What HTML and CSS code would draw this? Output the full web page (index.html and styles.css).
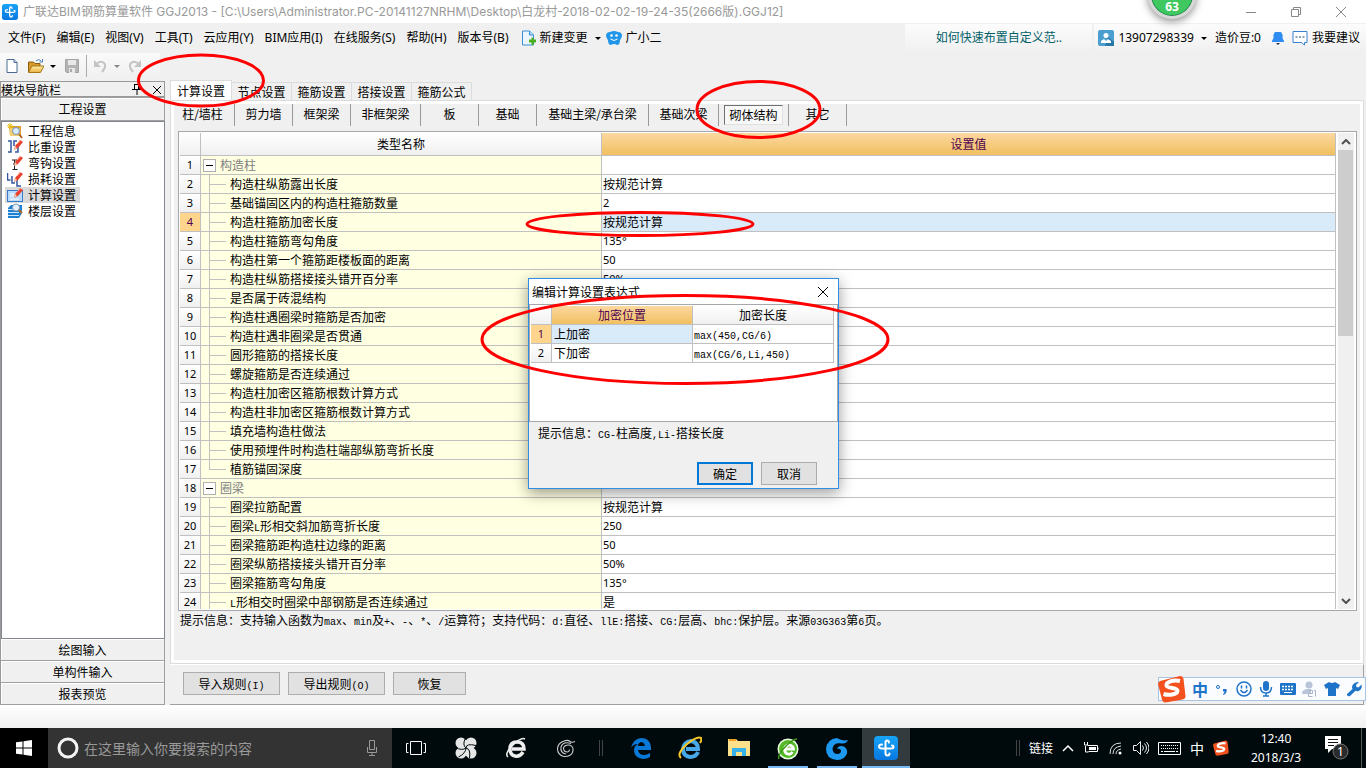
FILE: index.html
```html
<!DOCTYPE html>
<html lang="zh-CN">
<head>
<meta charset="utf-8">
<title>广联达BIM钢筋算量软件 GGJ2013</title>
<link rel="stylesheet" href="styles.css">
</head>
<body>
<svg class="defs" aria-hidden="true">
  <defs>
    <linearGradient id="blue" x1="0" y1="0" x2="0" y2="1"><stop offset="0" stop-color="#18a4f8"/><stop offset="1" stop-color="#0878e0"/></linearGradient>
    <linearGradient id="folder" x1="0" y1="0" x2="0" y2="1"><stop offset="0" stop-color="#fff0a8"/><stop offset="1" stop-color="#e8b040"/></linearGradient>
    <symbol id="app" viewBox="0 0 24 24"><rect width="24" height="24" rx="4" fill="url(#blue)"/><path d="M15 6.500q-.3-2-2-2-1.500 0-1.500 2v10.500q0 2.500 2 2.500t2-2M8 8.500q-3 0-3 2t3 2h9q2.500 0 2.500-1.500T18 9.500" fill="none" stroke="#fff" stroke-width="2" stroke-linecap="round"/></symbol>
    <symbol id="pencil" viewBox="0 0 10 12"><path d="M1 11l1-4 5-6 3 2-5 6z" fill="#e8402c"/><path d="M1 11l1-4 2 2z" fill="#f4d0b0"/><path d="M4 5l4-4" stroke="#ff9a80" stroke-width="1"/></symbol>
    <symbol id="sogou" viewBox="0 0 28 28"><path d="M2 6l20-5q3 0 3.500 3l2 17q0 3-3 3.500l-17 3q-3 0-3.500-3L0 9q0-2 2-3z" fill="#f4511e"/><path d="M22 6c-7-1.500-14 1-13.500 4.500C9 14 20 12 19.500 16c-.5 4-9 4.500-14 3" fill="none" stroke="#fff" stroke-width="4"/></symbol>
  </defs>
</svg>

<header class="titlebar">
  <svg class="i16" viewBox="0 0 24 24"><use href="#app"/></svg>
  <h1 class="title">广联达BIM钢筋算量软件 GGJ2013 - [C:\Users\Administrator.PC-20141127NRHM\Desktop\白龙村-2018-02-02-19-24-35(2666版).GGJ12]</h1>
  <div class="winbtns">
    <button aria-label="最小化"><svg viewBox="0 0 12 12"><path d="M1 6.500h10"/></svg></button>
    <button aria-label="还原"><svg viewBox="0 0 12 12"><path d="M1.500 3.500h7v7h-7zM3.500 3.500v-2h7v7h-2"/></svg></button>
    <button aria-label="关闭"><svg viewBox="0 0 12 12"><path d="M1 1l10 10M11 1L1 11"/></svg></button>
  </div>
</header>

<nav class="menubar">
  <button>文件(F)</button><button>编辑(E)</button><button>视图(V)</button><button>工具(T)</button><button>云应用(Y)</button><button>BIM应用(I)</button><button>在线服务(S)</button><button>帮助(H)</button><button>版本号(B)</button>
  <button class="withicon"><svg class="i16" viewBox="0 0 16 16"><path d="M2.500 1h7l4 4v10h-11z" fill="#eaf6ff" stroke="#3a8fd0"/><path d="M9.500 1v4h4" fill="#a8d8f8" stroke="#3a8fd0"/><path d="M9 9.500h2.500V7.500h2v2H16v3h-2.500V15h-2v-2.500H9z" fill="#4caf20"/></svg>新建变更<i class="caret"></i></button>
  <button class="withicon"><svg class="i16" viewBox="0 0 16 16"><path d="M4 2q4-2 8 0 4 0 4 4-1 3-2 4 0 5-3 5-1-1-3-1-2 0-3 1-3 0-3-5-1-1-2-4 0-4 4-4z" fill="#2196e8"/><circle cx="5.500" cy="5.500" r="1.300" fill="#fff"/><circle cx="10.500" cy="5.500" r="1.300" fill="#fff"/><path d="M4.500 9q3.500 3 7 0" stroke="#fff" fill="none"/></svg>广小二</button>
  <div class="promo"><a href="#">如何快速布置自定义范..</a></div>
  <div class="account">
    <button class="withicon"><svg class="i16" viewBox="0 0 16 16"><rect width="16" height="16" rx="2" fill="#4a9fd0"/><path d="M10 7l6 5v4H7z" fill="#2878a8"/><circle cx="8" cy="5.500" r="2.500" fill="#fff"/><path d="M3 13V11l3-2 2 2 2-2 3 2v2z" fill="#fff"/></svg>13907298339<i class="caret"></i></button>
    <span>造价豆:0</span>
    <svg class="bell" viewBox="0 0 12 16"><path d="M3 2h6q2 2 1.500 6l1.500 3v1H0v-1l1.500-3Q1 4 3 2z" fill="#2e8cf0"/><path d="M4 13h4l-2 2z" fill="#234"/></svg>
    <button class="withicon"><svg class="i16" viewBox="0 0 16 16"><path d="M1 1.500h14v11h-2.500V15l-3-2.500H1z" fill="#fff" stroke="#3a80d0"/><path d="M3.500 7h2M7 7h2M10.500 7h2" stroke="#246"/></svg>我要建议</button>
  </div>
</nav>

<div class="toolbar">
  <button aria-label="新建"><svg class="i16" viewBox="0 0 16 16"><path d="M3 1.500h7l3 3v10H3z" fill="#fff" stroke="#4a6a90"/><path d="M10 1.500v3h3" fill="#c8d8e8" stroke="#4a6a90"/></svg></button>
  <button aria-label="打开" class="open"><svg class="i16" viewBox="0 0 16 16"><path d="M0.500 14V4h5l1.500 1.500h5V8" fill="#d89828" stroke="#8a6010"/><path d="M.5 14.500L4 8h12l-3.500 6.500z" fill="url(#folder)" stroke="#a87818"/><path d="M8 3q3-3 5 0M14.500 1v3h-3" fill="none" stroke="#4a80c0"/></svg><i class="caret"></i></button>
  <button aria-label="保存" class="save"><svg class="i16" viewBox="0 0 16 16"><path d="M1.500 1.500h13v13h-12l-1-1z" fill="#b4b4b4" stroke="#a4a4a4"/><path d="M4 2h8v5H4zM5 10h6v5H5z" fill="#e8e8e8"/><path d="M6 11h2v3H6z" fill="#aaa"/></svg></button>
  <button aria-label="撤销" class="undo"><svg class="i16" viewBox="0 0 16 16"><path d="M4 6q5-4 8-1t-2 9" fill="none" stroke="#c4c4c4" stroke-width="2"/><path d="M2 2v7h7z" fill="#c4c4c4"/></svg><i class="caret dim"></i></button>
  <button aria-label="重做"><svg class="i16" viewBox="0 0 16 16"><path d="M11 6q-5-4-8-1t2 9" fill="none" stroke="#c4c4c4" stroke-width="2"/><path d="M13 2v7H6z" fill="#c4c4c4"/></svg></button>
</div>

<main class="workspace">
  <aside class="side">
    <div class="sidehead"><span>模块导航栏</span>
      <svg class="i12" viewBox="0 0 12 12"><path d="M3 1.500h6M3.500 1v5M7.500 1v5M8.500 1v5M1 6.500h10M6 7v5" stroke="#000" fill="none"/></svg>
      <svg class="i12" viewBox="0 0 12 12"><path d="M2 3l8 8M10 3l-8 8" stroke="#000" fill="none"/></svg>
    </div>
    <button class="sidebtn first">工程设置</button>
    <ul class="navlist">
      <li><svg class="i16" viewBox="0 0 16 16"><path d="M2 3h12v10H3z" fill="#e0a030"/><path d="M3 5h10v8H3z" fill="#f4d070"/><path d="M3 0v6M0 3h6M1 1l4 4M5 1L1 5" stroke="#e8c020"/><circle cx="9" cy="8" r="3.500" fill="#d8ecff" stroke="#7890b0"/><path d="M12 11l3 4" stroke="#b06820" stroke-width="2"/></svg>工程信息</li>
      <li><svg class="i16" viewBox="0 0 16 16"><path d="M1 2h3v11H1M10 2H7v5M8 13h3V8" stroke="#3058a0" fill="none" stroke-width="1.500"/><use href="#pencil" x="6" y="0" width="10" height="12"/></svg>比重设置</li>
      <li><svg class="i16" viewBox="0 0 16 16"><path d="M5 5h5M7.500 5v9M5.500 14.500h5M6 9h3" stroke="#222" fill="none"/><use href="#pencil" x="6" y="0" width="10" height="12"/></svg>弯钩设置</li>
      <li><svg class="i16" viewBox="0 0 16 16"><path d="M.5 2v7h3M5 5v7h3M10 9v6h4" stroke="#3058a0" fill="none" stroke-width="1.500"/><use href="#pencil" x="6" y="0" width="10" height="12"/></svg>损耗设置</li>
      <li class="on"><svg class="i16" viewBox="0 0 16 16"><rect x=".5" y="3.500" width="15" height="11" fill="#b8dcfc" stroke="#3a78c8"/><path d="M3 7h5M3 9h4M3 12h9" stroke="#fff"/><use href="#pencil" x="6" y="0" width="10" height="12"/></svg>计算设置</li>
      <li><svg class="i16" viewBox="0 0 16 16"><path d="M1 5l3-3h11v8l-3 5H1z" fill="#2080d0"/><path d="M1 6.500h11M1 9.500h11M1 12.500h11" stroke="#c8e8ff"/><circle cx="9" cy="4.500" r="3.500" fill="#e4f2ff" stroke="#8098b0"/><path d="M12 7l3 3" stroke="#b06820" stroke-width="2"/></svg>楼层设置</li>
    </ul>
    <button class="sidebtn">绘图输入</button>
    <button class="sidebtn">单构件输入</button>
    <button class="sidebtn">报表预览</button>
  </aside>

  <section class="content">
    <div class="tabs">
      <button class="on">计算设置</button><button>节点设置</button><button>箍筋设置</button><button>搭接设置</button><button>箍筋公式</button>
    </div>
    <div class="page">
      <div class="subtabs">
        <button class="w64">柱/墙柱</button><button class="w58">剪力墙</button><button class="w58">框架梁</button><button class="w70">非框架梁</button><button class="w58">板</button><button class="w58">基础</button><button class="w112">基础主梁/承台梁</button><button class="w70">基础次梁</button><button class="w70 on"><span>砌体结构</span></button><button class="w58">其它</button>
      </div>
      <div class="gridbox">
        <div class="gridview">
        <table class="grid">
          <colgroup><col class="c1"><col class="c2"><col></colgroup>
          <thead><tr><th></th><th>类型名称</th><th class="sel">设置值</th></tr></thead>
          <tbody>
            <tr class="cat"><th>1</th><td><button class="fold" aria-label="折叠"></button>构造柱</td><td></td></tr>
            <tr><th>2</th><td>构造柱纵筋露出长度</td><td>按规范计算</td></tr>
            <tr><th>3</th><td>基础锚固区内的构造柱箍筋数量</td><td class="num">2</td></tr>
            <tr class="cur"><th>4</th><td>构造柱箍筋加密长度</td><td>按规范计算</td></tr>
            <tr><th>5</th><td>构造柱箍筋弯勾角度</td><td class="num">135°</td></tr>
            <tr><th>6</th><td>构造柱第一个箍筋距楼板面的距离</td><td class="num">50</td></tr>
            <tr><th>7</th><td>构造柱纵筋搭接接头错开百分率</td><td class="num">50%</td></tr>
            <tr><th>8</th><td>是否属于砖混结构</td><td></td></tr>
            <tr><th>9</th><td>构造柱遇圈梁时箍筋是否加密</td><td></td></tr>
            <tr><th>10</th><td>构造柱遇非圈梁是否贯通</td><td></td></tr>
            <tr><th>11</th><td>圆形箍筋的搭接长度</td><td></td></tr>
            <tr><th>12</th><td>螺旋箍筋是否连续通过</td><td></td></tr>
            <tr><th>13</th><td>构造柱加密区箍筋根数计算方式</td><td></td></tr>
            <tr><th>14</th><td>构造柱非加密区箍筋根数计算方式</td><td></td></tr>
            <tr><th>15</th><td>填充墙构造柱做法</td><td></td></tr>
            <tr><th>16</th><td>使用预埋件时构造柱端部纵筋弯折长度</td><td></td></tr>
            <tr class="last"><th>17</th><td>植筋锚固深度</td><td></td></tr>
            <tr class="cat"><th>18</th><td><button class="fold" aria-label="折叠"></button>圈梁</td><td></td></tr>
            <tr><th>19</th><td>圈梁拉筋配置</td><td>按规范计算</td></tr>
            <tr><th>20</th><td>圈梁<span class="m">L</span>形相交斜加筋弯折长度</td><td class="num">250</td></tr>
            <tr><th>21</th><td>圈梁箍筋距构造柱边缘的距离</td><td class="num">50</td></tr>
            <tr><th>22</th><td>圈梁纵筋搭接接头错开百分率</td><td class="num">50%</td></tr>
            <tr><th>23</th><td>圈梁箍筋弯勾角度</td><td class="num">135°</td></tr>
            <tr><th>24</th><td><span class="m">L</span>形相交时圈梁中部钢筋是否连续通过</td><td>是</td></tr>
          </tbody>
        </table>
        </div>
        <div class="scroll">
          <button aria-label="向上"><svg viewBox="0 0 10 6"><path d="M1 5l4-4 4 4"/></svg></button>
          <div class="track"><div class="thumb"></div></div>
          <button aria-label="向下"><svg viewBox="0 0 10 6"><path d="M1 1l4 4 4-4"/></svg></button>
        </div>
      </div>
      <p class="tip">提示信息：支持输入函数为<span class="m">max</span>、<span class="m">min</span>及<span class="m">+</span>、<span class="m">-</span>、<span class="m">*</span>、<span class="m">/</span>运算符；支持代码：<span class="m">d:</span>直径、<span class="m">llE:</span>搭接、<span class="m">CG:</span>层高、<span class="m">bhc:</span>保护层。来源<span class="m">03G363</span>第<span class="m">6</span>页。</p>
    </div>
    <div class="actions">
      <button class="btn">导入规则<span class="m">(I)</span></button><button class="btn">导出规则<span class="m">(O)</span></button><button class="btn short">恢复</button>
    </div>
  </section>
</main>
<div class="status"></div>

<footer class="taskbar">
  <button class="start" aria-label="开始"><svg class="i16" viewBox="0 0 16 16"><path d="M0 2.300l6.500-.9v6.100H0zM7.500 1.200L16 0v7.500H7.500zM0 8.500h6.500v6.100L0 13.700zM7.500 8.500H16V16l-8.500-1.200z" fill="#fff"/></svg></button>
  <label class="search"><svg class="i22" viewBox="0 0 22 22"><circle cx="11" cy="11" r="9" fill="none" stroke="#f4f4f4" stroke-width="3"/></svg><input type="text" placeholder="在这里输入你要搜索的内容" aria-label="搜索"><svg class="mic" viewBox="0 0 12 18"><path d="M3.500 1.500h5v9h-5zM1.500 8v5.500h9V8M6 13.500V17M3 16.500h6" fill="none" stroke="#999"/></svg></label>
  <button class="task" aria-label="任务视图"><svg class="i22" viewBox="0 0 22 22"><path d="M5.500 4.500h11v13h-11zM3.500 6.500h-2v9h2M18.500 6.500h2v9h-2" fill="none" stroke="#fff"/></svg></button>
  <button class="task" aria-label="风扇"><svg class="i22" viewBox="0 0 22 22"><g fill="#e6e6e6"><circle cx="6" cy="6" r="5.500"/><circle cx="16" cy="6" r="5.500"/><circle cx="6" cy="16" r="5.500"/><circle cx="16" cy="16" r="5.500"/><circle cx="11" cy="11" r="8"/></g><path d="M11 11Q7 8 10.500 1M11 11q0-5 10-2.500M11 11q5 1 3.500 10M11 11q0 5-7.500 9M11 11q-4 3-10.500-.5" fill="none" stroke="#000a0d"/></svg></button>
  <button class="task" aria-label="浏览器"><svg class="i22" viewBox="0 0 22 22"><path d="M18 15q-3 5-8 4-5-1-5-7 0-7 7-7 7 0 7 7H7" fill="none" stroke="#eee" stroke-width="3.500"/><path d="M3 20Q-1 17 8 8q8-8 12-6" fill="none" stroke="#eee" stroke-width="1.500"/></svg></button>
  <button class="task" aria-label="广联达"><svg class="i22" viewBox="0 0 22 22"><path d="M20 4.500q-3 1.500-5 0-2-2-6-.5Q3 6 2.500 11.500 2.500 18 9 19.500q6 .5 8.500-4 2-6-3-7.500-5-.5-6 3 0 4 4 4 2-.5 2-2.500M16 6.500Q8 4 6 10q-1 6 5 7" fill="none" stroke="#ccc" stroke-width="1.100"/></svg></button>
  <i class="grip"></i>
  <button class="task" aria-label="Edge"><svg class="i22" viewBox="0 0 22 22"><path d="M1 11Q3 2 11 1q9 0 10 9v3H8q1 5 6 5 3 0 6-2v4q-3 2-7 2-9-1-9-9 0-4 4-6-5 0-7 4zM8 9h7q-1-4-4-4-3 1-3 4z" fill="#0a78d7"/></svg></button>
  <button class="task" aria-label="Internet Explorer"><svg class="i24" viewBox="0 0 24 24"><path d="M20 16q-2 5-8 5-7-1-7-8 1-7 8-8 7 1 7 8H8" fill="none" stroke="#48a8e8" stroke-width="4"/><path d="M3 22Q-2 18 9 8q10-8 14-6 1 2-1 5" fill="none" stroke="#f4c828" stroke-width="2"/></svg></button>
  <button class="task" aria-label="文件资源管理器"><svg class="i22" viewBox="0 0 22 22"><path d="M0 2h8l2 2h12v15H0z" fill="#fde08a"/><path d="M1 2h7v2H1z" fill="#f0a020"/><path d="M4 11h14v8h-4v-4H8v4H4z" fill="#38b0e8"/></svg></button>
  <button class="task run" aria-label="360浏览器"><svg class="i22" viewBox="0 0 22 22"><circle cx="11" cy="11" r="10.500" fill="#e8ffe0"/><circle cx="11" cy="11" r="9" fill="#54b828"/><path d="M15.500 14q-2 3-5 2-3-1-3-5 1-4 5-4 4 1 4 4H8" fill="none" stroke="#fff" stroke-width="2.800"/><path d="M2 21Q0 17 9 8q7-7 11-7" fill="none" stroke="#3c9818" stroke-width="1.500"/></svg></button>
  <button class="task run" aria-label="广联达G"><svg class="i24" viewBox="0 0 24 24"><path d="M23 3q-2 4-6 3.500Q8 5 7.500 12q.5 5 5 5 3.500-.5 3.500-3t-4-2.500q2-3.500 7-2 4 3 3 7-3 7-10 6.500Q1 22 1 12 2 2 12 1q5 3.500 11 2z" fill="#1c98f0"/></svg></button>
  <button class="task run active" aria-label="钢筋算量"><svg class="i24" viewBox="0 0 24 24"><use href="#app"/></svg></button>
  <div class="tray">
    <i class="grip"></i>
    <span class="links">链接</span>
    <svg class="i12" viewBox="0 0 12 12"><path d="M1 9l5-5 5 5" fill="none" stroke="#fff" stroke-width="1.500"/></svg>
    <svg class="i16" viewBox="0 0 16 16"><path d="M4.500 5.500h10v6h-9M15 7.500v2M2.500 6v6h3M1.500 2v3h3V2" fill="none" stroke="#fff"/><path d="M6 7h7v3H6z" fill="#fff"/></svg>
    <svg class="i16" viewBox="0 0 16 16"><path d="M2 14Q2 3 13 3M5 14q0-7 8-8M8 14q0-4 5-5" fill="none" stroke="#ddd"/><circle cx="12" cy="13" r="1.500" fill="#fff"/></svg>
    <svg class="i16" viewBox="0 0 16 16"><path d="M.5 5.500h3l4-4v13l-4-4h-3zM9.500 5.500q2 2.500 0 5M11.500 3.500q4 4.500 0 9M13.500 2q5 6 0 12" fill="none" stroke="#eee"/></svg>
    <svg class="kb" viewBox="0 0 23 13"><path d="M.5.500h22v12H.500z" fill="none" stroke="#fff"/><path d="M3 3.500h17M3 6.500h17" stroke="#fff" stroke-dasharray="1 1"/><path d="M3 9.500h2M6 9.500h11M18 9.500h2" stroke="#fff"/></svg>
    <span class="ime">中</span>
    <svg class="i16" viewBox="0 0 28 28"><use href="#sogou"/></svg>
    <time class="clock">12:40<br>2018/3/3</time>
    <svg class="note" viewBox="0 0 24 24"><path d="M0 0h16v13H7l-4 4v-4H0z" fill="#fff"/><path d="M3 3.500h10M3 6.500h10M3 9.500h6" stroke="#111"/><circle cx="15.500" cy="15.500" r="7.500" fill="#2b2b2b" stroke="#777"/><text x="12" y="20">1</text></svg>
  </div>
</footer>

<div class="ball">63</div>

<div class="imebar">
  <svg class="slogo" viewBox="0 0 28 28"><use href="#sogou"/></svg>
  <b>中</b>
  <svg class="i16" viewBox="0 0 16 16"><circle cx="4" cy="6" r="1.500" fill="none" stroke="#1e74c8"/><path d="M9 8h3.500q1 4-3 6l-.5-1q1.500-1 1.500-2.500H9z" fill="#1e74c8"/></svg>
  <svg class="i16" viewBox="0 0 16 16"><circle cx="8" cy="8" r="7" fill="none" stroke="#1e74c8" stroke-width="1.500"/><path d="M5.500 4.500v3M10.500 4.500v3M4.500 9q3.500 5 7 0" fill="none" stroke="#1e74c8" stroke-width="1.500"/></svg>
  <svg class="i16" viewBox="0 0 16 16"><rect x="5" y="0" width="6" height="10" rx="3" fill="#1e74c8"/><path d="M2.500 6q0 6 5.500 6t5.500-6M8 12v3M5 15h6" fill="none" stroke="#1e74c8" stroke-width="1.500"/></svg>
  <svg class="i16" viewBox="0 0 16 16"><rect y="2" width="16" height="12" rx="1" fill="#1e74c8"/><path d="M2 5.500h12M2 8.500h12" stroke="#fff" stroke-width="1.500" stroke-dasharray="2 1"/><path d="M4 11.500h8" stroke="#fff"/></svg>
  <svg class="i16" viewBox="0 0 16 16"><circle cx="7" cy="4" r="3.500" fill="#b8c4d8"/><path d="M0 13q0-5 6-5h3v5z" fill="#b8c4d8"/><path d="M6.500 9.500h4v3h-4v3h4M12 9.500h1.500v6" fill="none" stroke="#aab4c8"/></svg>
  <svg class="i16" viewBox="0 0 16 16"><path d="M5 1q3 2 6 0l5 3-2 4-2-1v8H4V7L2 8 0 4z" fill="#1e74c8"/></svg>
  <svg class="i16" viewBox="0 0 16 16"><path d="M13 1l-3 3 .5 2 2 .5 3-3q1 5-3 6.500-1.500.5-3-.2L4 15q-2 1-3-1l0-1 5.500-5Q5 5 8 2.500 10 .5 13 1z" fill="#1e74c8"/></svg>
</div>

<div class="dialog" role="dialog" aria-labelledby="dt">
  <div class="dhead"><h2 id="dt">编辑计算设置表达式</h2><button aria-label="关闭"><svg class="i12" viewBox="0 0 12 12"><path d="M1 1l10 10M11 1L1 11" stroke="#000" fill="none"/></svg></button></div>
  <div class="dgrid">
    <table class="grid small">
      <colgroup><col class="c1"><col><col></colgroup>
      <thead><tr><th></th><th class="sel">加密位置</th><th>加密长度</th></tr></thead>
      <tbody>
        <tr class="cur"><th>1</th><td>上加密</td><td><span class="m">max(450,CG/6)</span></td></tr>
        <tr><th>2</th><td>下加密</td><td><span class="m">max(CG/6,Li,450)</span></td></tr>
      </tbody>
    </table>
  </div>
  <p class="dtip">提示信息：<span class="m">CG-</span>柱高度<span class="m">,Li-</span>搭接长度</p>
  <div class="dbtns"><button class="btn ok">确定</button><button class="btn">取消</button></div>
</div>

<svg class="marks" viewBox="0 0 1366 768" aria-hidden="true">
  <g fill="none" stroke="#f00" stroke-width="3">
    <ellipse cx="201" cy="80.500" rx="62.500" ry="25.500"/>
    <ellipse cx="758.500" cy="109.500" rx="61.500" ry="28"/>
    <ellipse cx="640" cy="224" rx="113" ry="11.500"/>
    <ellipse cx="685" cy="339.500" rx="203" ry="44"/>
  </g>
</svg>
</body>
</html>
```
FILE: styles.css
```css
* { box-sizing: border-box; }
html, body { height: 100%; }
body {
  margin: 0;
  display: flex;
  flex-direction: column;
  position: relative;
  overflow: hidden;
  background: #f0f0f0;
  color: #000;
  font: 12px/16px "Noto Sans CJK SC", sans-serif;
}
button { font: inherit; color: inherit; background: none; border: 0; padding: 0; margin: 0; white-space: nowrap; }
h1, h2, p, ul { margin: 0; padding: 0; font-weight: normal; font-size: 12px; }
svg { flex: none; display: block; }
.defs { position: absolute; width: 0; height: 0; }
.i12 { width: 12px; height: 12px; }
.i16 { width: 16px; height: 16px; }
.i22 { width: 22px; height: 22px; }
.i24 { width: 24px; height: 24px; }
.m { font-family: "Liberation Mono", monospace; font-size: 10px; line-height: 10px; white-space: pre; }
.caret { width: 0; height: 0; border: 3px solid transparent; border-top-color: #000; border-bottom: 0; }
.caret.dim { border-top-color: #888; }

.titlebar { flex: none; height: 23px; display: flex; align-items: center; background: #fff; padding-left: 2px; gap: 5px; }
.title { flex: 1; color: #999; font-family: Inter, "Noto Sans CJK SC", sans-serif; white-space: nowrap; }
.winbtns { display: flex; margin-right: 3px; }
.winbtns button { width: 45px; height: 22px; display: grid; place-items: center; }
.winbtns svg { width: 12px; height: 12px; fill: none; stroke: #888; }

.menubar { flex: none; height: 30px; display: flex; align-items: center; padding-left: 8px; gap: 11px; font-family: "Noto Sans", "Noto Sans CJK SC", sans-serif; }
.withicon { display: flex; align-items: center; gap: 4px; }
.withicon .caret { margin-left: 3px; }
.menubar .withicon:nth-of-type(11) { margin-left: -6px; }
.promo { margin: 0 -9px 0 auto; width: 187px; height: 28px; text-align: center; line-height: 28px; background: linear-gradient(#fcfcfc, #f0f0f0); }
.promo a { color: #006068; text-decoration: none; }
.account { height: 28px; display: flex; align-items: center; gap: 8px; padding: 0 6px 0 4px; background: linear-gradient(#fcfcfc, #f0f0f0); }
.bell { width: 12px; height: 16px; margin-left: 3px; }

.toolbar { flex: none; width: 160px; height: 26px; display: flex; align-items: center; padding-left: 4px; gap: 8px; background: linear-gradient(#fafafa, #f0f0f0); }
.toolbar button { display: flex; align-items: center; gap: 6px; height: 22px; }
.toolbar .save { padding-right: 6px; border-right: 1px solid #aaa; }
.toolbar .undo { margin-left: -3px; }

.workspace { flex: 1; min-height: 0; display: flex; padding-top: 2px; gap: 5px; }
.side { width: 165px; display: flex; flex-direction: column; border-left: 1px solid #999; }
.sidehead { height: 16px; line-height: 13px; display: flex; align-items: center; gap: 8px; border: 1px solid #999; border-left: 0; padding-right: 1px; }
.sidehead span { flex: 1; }
.sidebtn { height: 22px; flex: none; border: 1px solid #a0a0a0; border-width: 0 1px 1px 0; box-shadow: inset 1px 1px #fff; }
.sidebtn.first { height: 24px; border-top-width: 1px; }
.navlist { flex: 1; list-style: none; background: #fff; border: 1px solid #828790; padding: 1px 0 0 3px; display: flex; flex-direction: column; align-items: flex-start; }
.navlist li { display: flex; gap: 5px; height: 16px; line-height: 16px; padding: 0 4px 0 2px; }
.navlist .on { background: #d9d9d9; }

.content { flex: 1; min-width: 0; display: flex; flex-direction: column; padding-right: 2px; margin-top: -1px; }
.tabs { height: 20px; flex: none; display: flex; align-items: flex-end; }
.tabs button { width: 60px; height: 18px; border: 1px solid #dcdcdc; border-left: 0; border-bottom: 0; }
.tabs .on { width: 62px; height: 20px; border-left: 1px solid #dcdcdc; background: #fff; }
.page { flex: 1; min-height: 0; display: flex; flex-direction: column; border: 1px solid #dcdcdc; box-shadow: inset 0 0 0 3px #fff; padding: 3px 6px 0 7px; }
.subtabs { height: 27px; flex: none; display: flex; align-items: flex-start; margin-left: -7px; }
.subtabs button { height: 22px; padding-bottom: 2px; border-right: 1px solid #999; }
.w58 { width: 58px; } .w64 { width: 64px; } .w70 { width: 70px; } .w112 { width: 112px; }
.subtabs .on { padding: 0 5px; }
.subtabs .on span { display: block; height: 20px; line-height: 17px; background: #f8f8f8; border: 1px solid #e0e0e0; border-top-color: #707070; border-left-color: #707070; }

.gridbox { flex: 1; min-height: 0; display: flex; gap: 2px; border: 1px solid #a6a8ac; padding: 1px; background: #fff; }
.gridview { flex: 1; min-width: 0; overflow: hidden; }
.grid { width: 100%; table-layout: fixed; border-collapse: separate; border-spacing: 0; background: #fff; }
.grid .c1 { width: 21px; }
.grid .c2 { width: 401px; }
.grid th, .grid td { height: 19px; padding: 0 1px; border: 1px solid #c0c0c0; border-width: 0 1px 1px 0; font-weight: normal; line-height: 18px; white-space: nowrap; overflow: hidden; text-align: left; }
.grid th { text-align: center; background: linear-gradient(#fff, #f0f0f0); }
.grid thead th { height: 23px; }
.grid tbody th, .num { font-family: "Noto Sans", sans-serif; font-size: 11px; }
.grid thead .sel { background: linear-gradient(#fcd8a0, #f0c060); color: #500050; }
.grid .cur th { background: #ffd48c; color: #500050; }
.grid .cur td:nth-child(3) { background: #d9eaf9; }
.grid td:nth-child(2) {
  padding-left: 29px;
  background:
    linear-gradient(#c0c0c0, #c0c0c0) 8px 0 / 1px 100% no-repeat,
    linear-gradient(#c0c0c0, #c0c0c0) 8px 9px / 17px 1px no-repeat,
    #ffffe1;
}
.grid .last td:nth-child(2) { background-size: 1px 10px, 17px 1px, auto; }
.grid .cat td:nth-child(2) { padding-left: 2px; background: #ffffe1; color: #808080; }
.fold { width: 13px; height: 13px; margin-right: 4px; vertical-align: -1px; border: 1px solid #b0b0b0; background: linear-gradient(#000, #000) center / 7px 1px no-repeat #fff; }
.scroll { width: 17px; display: flex; flex-direction: column; background: #f0f0f0; border-right: 1px solid #fff; }
.scroll button { height: 17px; display: grid; place-items: center; }
.scroll svg { width: 10px; height: 6px; fill: none; stroke: #505050; stroke-width: 2; }
.track { flex: 1; }
.thumb { height: 42%; background: #cdcdcd; margin-right: 1px; }
.tip { height: 52px; flex: none; padding: 1px 2px; white-space: nowrap; }
.actions { flex: none; height: 41px; display: flex; gap: 8px; padding: 7px 13px; border-top: 1px solid #fff; border-bottom: 1px solid #a0a0a0; border-right: 1px solid #a0a0a0; }
.btn { width: 97px; height: 23px; background: #e1e1e1; border: 1px solid #adadad; }
.btn.short { width: 73px; }
.status { flex: none; height: 23px; background: linear-gradient(#fff, #f0f0f0); }

.taskbar { flex: none; height: 40px; display: flex; align-items: stretch; background: #000a0d; color: #fff; }
.start { width: 48px; display: grid; place-items: center; background: #000; }
.search { width: 344px; display: flex; align-items: center; gap: 5px; padding: 0 14px 0 9px; background: #333; }
.search input { flex: 1; min-width: 0; background: none; border: 0; padding: 0; color: #999; font: 14px/20px "Noto Sans CJK SC", sans-serif; }
.search input::placeholder { color: #999; }
.mic { width: 12px; height: 18px; }
.task { width: 48px; display: grid; place-items: center; border: solid transparent; border-width: 2px 0; }
.task + .task { margin-left: 2px; }
.grip ~ .task + .task { margin-left: 1px; }
.run { background: linear-gradient(#76b9f5, #76b9f5) center bottom / 40px 2px no-repeat; border-bottom: 0; }
.run.active { background: linear-gradient(#76b9f5, #76b9f5) center bottom / 48px 2px no-repeat #333b3e; border-top: 0; }
.grip { width: 4px; height: 16px; align-self: center; border: 1px solid #444; border-width: 0 1px; margin: 0 14px 0 9px; }
.tray { margin-left: auto; display: flex; align-items: center; gap: 9px; padding-right: 4px; border-right: 1px solid #555; margin-right: 4px; }
.tray .grip { margin: 0; }
.ime { font-size: 14px; }
.kb { width: 23px; height: 13px; }
.clock { width: 60px; margin: 0 10px 0 8px; text-align: center; line-height: 19px; font-family: "Noto Sans", sans-serif; }
.note { width: 24px; height: 24px; margin: 0 8px 0 0; }
.note text { fill: #fff; font: 12px "Noto Sans", sans-serif; }

.ball { position: absolute; top: -29px; right: 170px; width: 48px; height: 48px; border-radius: 50%; background: #40c860; border: 3px solid #d8d8d8; box-shadow: inset 0 0 0 1px #208050, 0 2px 8px #888; color: #fff; font: bold 12px/16px "Noto Sans", sans-serif; text-align: center; padding-top: 25px; }
.imebar { position: absolute; right: 0; bottom: 67px; height: 24px; display: flex; align-items: center; gap: 6px; padding: 0 3px; background: #fafcff; border: 1px solid #a8c4e0; color: #1e74c8; }
.imebar b { font-size: 16px; }
.slogo { width: 28px; height: 28px; margin-left: -4px; }

.dialog { position: absolute; left: 528px; top: 278px; width: 311px; background: #f0f0f0; border: 1px solid #2f8de4; box-shadow: 0 4px 14px rgba(0,0,0,.4); }
.dhead { height: 25px; line-height: 23px; display: flex; align-items: center; justify-content: space-between; padding: 0 9px 0 3px; background: #fff; }
.dgrid { height: 118px; background: #fff; border: 1px solid #a6a8ac; padding: 1px 3px 0 1px; }
.small thead th { height: 19px; }
.grid.small td:nth-child(2) { background: #fff; padding-left: 2px; }
.grid.small td:nth-child(3) { background: #fff; }
.grid.small .cur td:nth-child(2) { background: #d9eaf9; }
.dtip { padding: 3px 9px 0; height: 40px; }
.dbtns { display: flex; justify-content: flex-end; gap: 8px; padding: 0 21px 3px 0; }
.dbtns .btn { width: 56px; }
.btn.ok { border: 2px solid #0078d7; }
.marks { position: absolute; left: 0; top: 0; width: 1366px; height: 768px; pointer-events: none; }
```
